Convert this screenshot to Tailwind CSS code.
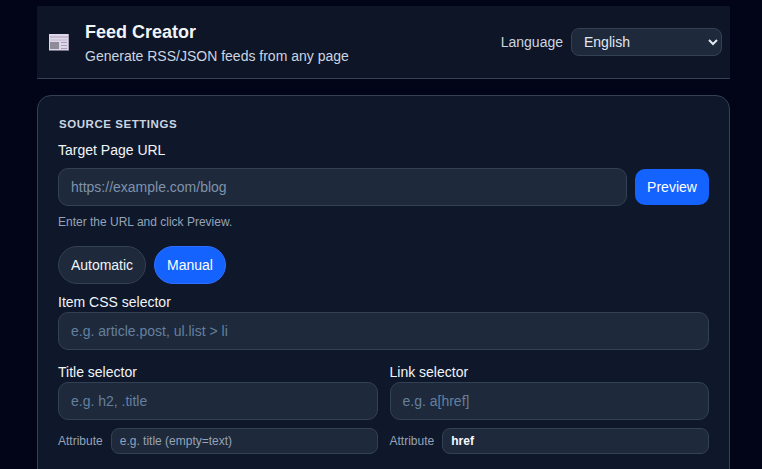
<!doctype html>
<html><head><meta charset="utf-8"><script src="https://cdn.jsdelivr.net/npm/@tailwindcss/browser@4"></script></head>
<body class="bg-[#020418] h-[469px] overflow-hidden font-['Liberation_Sans',Arial,sans-serif]">
<div class="w-[693px] ml-[37px] pt-[6px]">
<header class="h-[73px] bg-[#0e1526] border-b border-[#334155] flex items-center justify-between pl-[12px] pr-[8px]">
  <div class="flex items-center">
    <svg class="w-[20px] h-[18px] mr-[16px]" viewBox="0 0 20 18">
      <rect x="0" y="1" width="19.5" height="16.5" fill="#e0d6ea"/><rect x="19" y="1" width="1" height="16.5" fill="#a9a0b8"/>
      <rect x="1" y="3.5" width="18" height="1" fill="#a8a0b2"/>
      <rect x="1" y="9" width="9" height="7" fill="#8f8b99"/>
      <rect x="12" y="9" width="6" height="1" fill="#a8a0b2"/><rect x="12" y="12" width="6" height="1" fill="#a8a0b2"/><rect x="12" y="15" width="6" height="1" fill="#a8a0b2"/>
      <rect x="1" y="6.5" width="17" height="1" fill="#c0b8cc"/>
    </svg>
    <div class="mt-[1px]">
      <h1 class="text-[18px] leading-[22px] font-bold text-[#f1f5f9]">Feed Creator</h1>
      <p class="text-[14px] leading-[17px] mt-[5px] text-[#cbd5e1]">Generate RSS/JSON feeds from any page</p>
    </div>
  </div>
  <div class="flex items-center gap-[8px]">
    <span class="text-[14px] text-[#cbd5e1]">Language</span>
    <select class="w-[151px] h-[28px] pl-[8px] rounded-[8px] bg-[#1e293b] border border-[#334155] text-[14px] text-[#e2e8f0]"><option>English</option></select>
  </div>
</header>
<main class="mt-[16px] h-[400px] bg-[#0f172a] border border-[#334155] rounded-[14px] px-[20px] pt-[21px]">
  <h2 class="text-[11.5px] leading-[14px] font-bold tracking-[0.55px] uppercase text-[#cbd5e1] ml-[1px]">Source settings</h2>
  <label class="block mt-[10px] text-[14px] leading-[18px] text-[#f1f5f9]">Target Page URL</label>
  <div class="flex gap-[8px] mt-[9px] items-center">
    <input class="flex-1 min-w-0 h-[38px] px-[12px] rounded-[10px] bg-[#1e293b] border border-[#334155] text-[14px] text-[#e2e8f0] placeholder:text-[#7e93ad]" placeholder="https://example.com/blog">
    <button class="w-[74px] h-[36px] rounded-[10px] bg-[#1463ff] text-[14px] text-white">Preview</button>
  </div>
  <p class="mt-[9px] text-[12px] leading-[15px] text-[#94a3b8]">Enter the URL and click Preview.</p>
  <div class="flex gap-[8px] mt-[16px]">
    <button class="w-[88px] h-[38px] rounded-full bg-[#1e293b] border border-[#334155] text-[14px] text-[#f1f5f9]">Automatic</button>
    <button class="w-[72px] h-[38px] rounded-full bg-[#1463ff] border border-[#2f6fff] text-[14px] text-white">Manual</button>
  </div>
  <label class="block mt-[9px] text-[14px] leading-[18px] text-[#f1f5f9]">Item CSS selector</label>
  <input class="block w-full h-[38px] mt-[1px] px-[12px] rounded-[10px] bg-[#1e293b] border border-[#334155] text-[14px] placeholder:text-[#64809f]" placeholder="e.g. article.post, ul.list > li">
  <div class="grid grid-cols-2 gap-x-[12px] mt-[13px]">
    <div>
      <label class="block text-[14px] leading-[18px] text-[#f1f5f9]">Title selector</label>
      <input class="block w-full h-[38px] mt-[1px] px-[12px] rounded-[10px] bg-[#1e293b] border border-[#334155] text-[14px] placeholder:text-[#64809f]" placeholder="e.g. h2, .title">
      <div class="flex items-center gap-[8px] mt-[8px]">
        <span class="text-[12px] text-[#94a3b8]">Attribute</span>
        <input class="flex-1 min-w-0 h-[26px] px-[8px] rounded-[8px] bg-[#1e293b] border border-[#334155] text-[12px] placeholder:text-[#94a3b8]" placeholder="e.g. title (empty=text)">
      </div>
    </div>
    <div>
      <label class="block text-[14px] leading-[18px] text-[#f1f5f9]">Link selector</label>
      <input class="block w-full h-[38px] mt-[1px] px-[12px] rounded-[10px] bg-[#1e293b] border border-[#334155] text-[14px] placeholder:text-[#64809f]" placeholder="e.g. a[href]">
      <div class="flex items-center gap-[8px] mt-[8px]">
        <span class="text-[12px] text-[#94a3b8]">Attribute</span>
        <input class="flex-1 min-w-0 h-[26px] px-[8px] rounded-[8px] bg-[#1e293b] border border-[#334155] text-[12px] font-bold text-[#f8fafc]" value="href">
      </div>
    </div>
  </div>
</main>
</div>
</body></html>
